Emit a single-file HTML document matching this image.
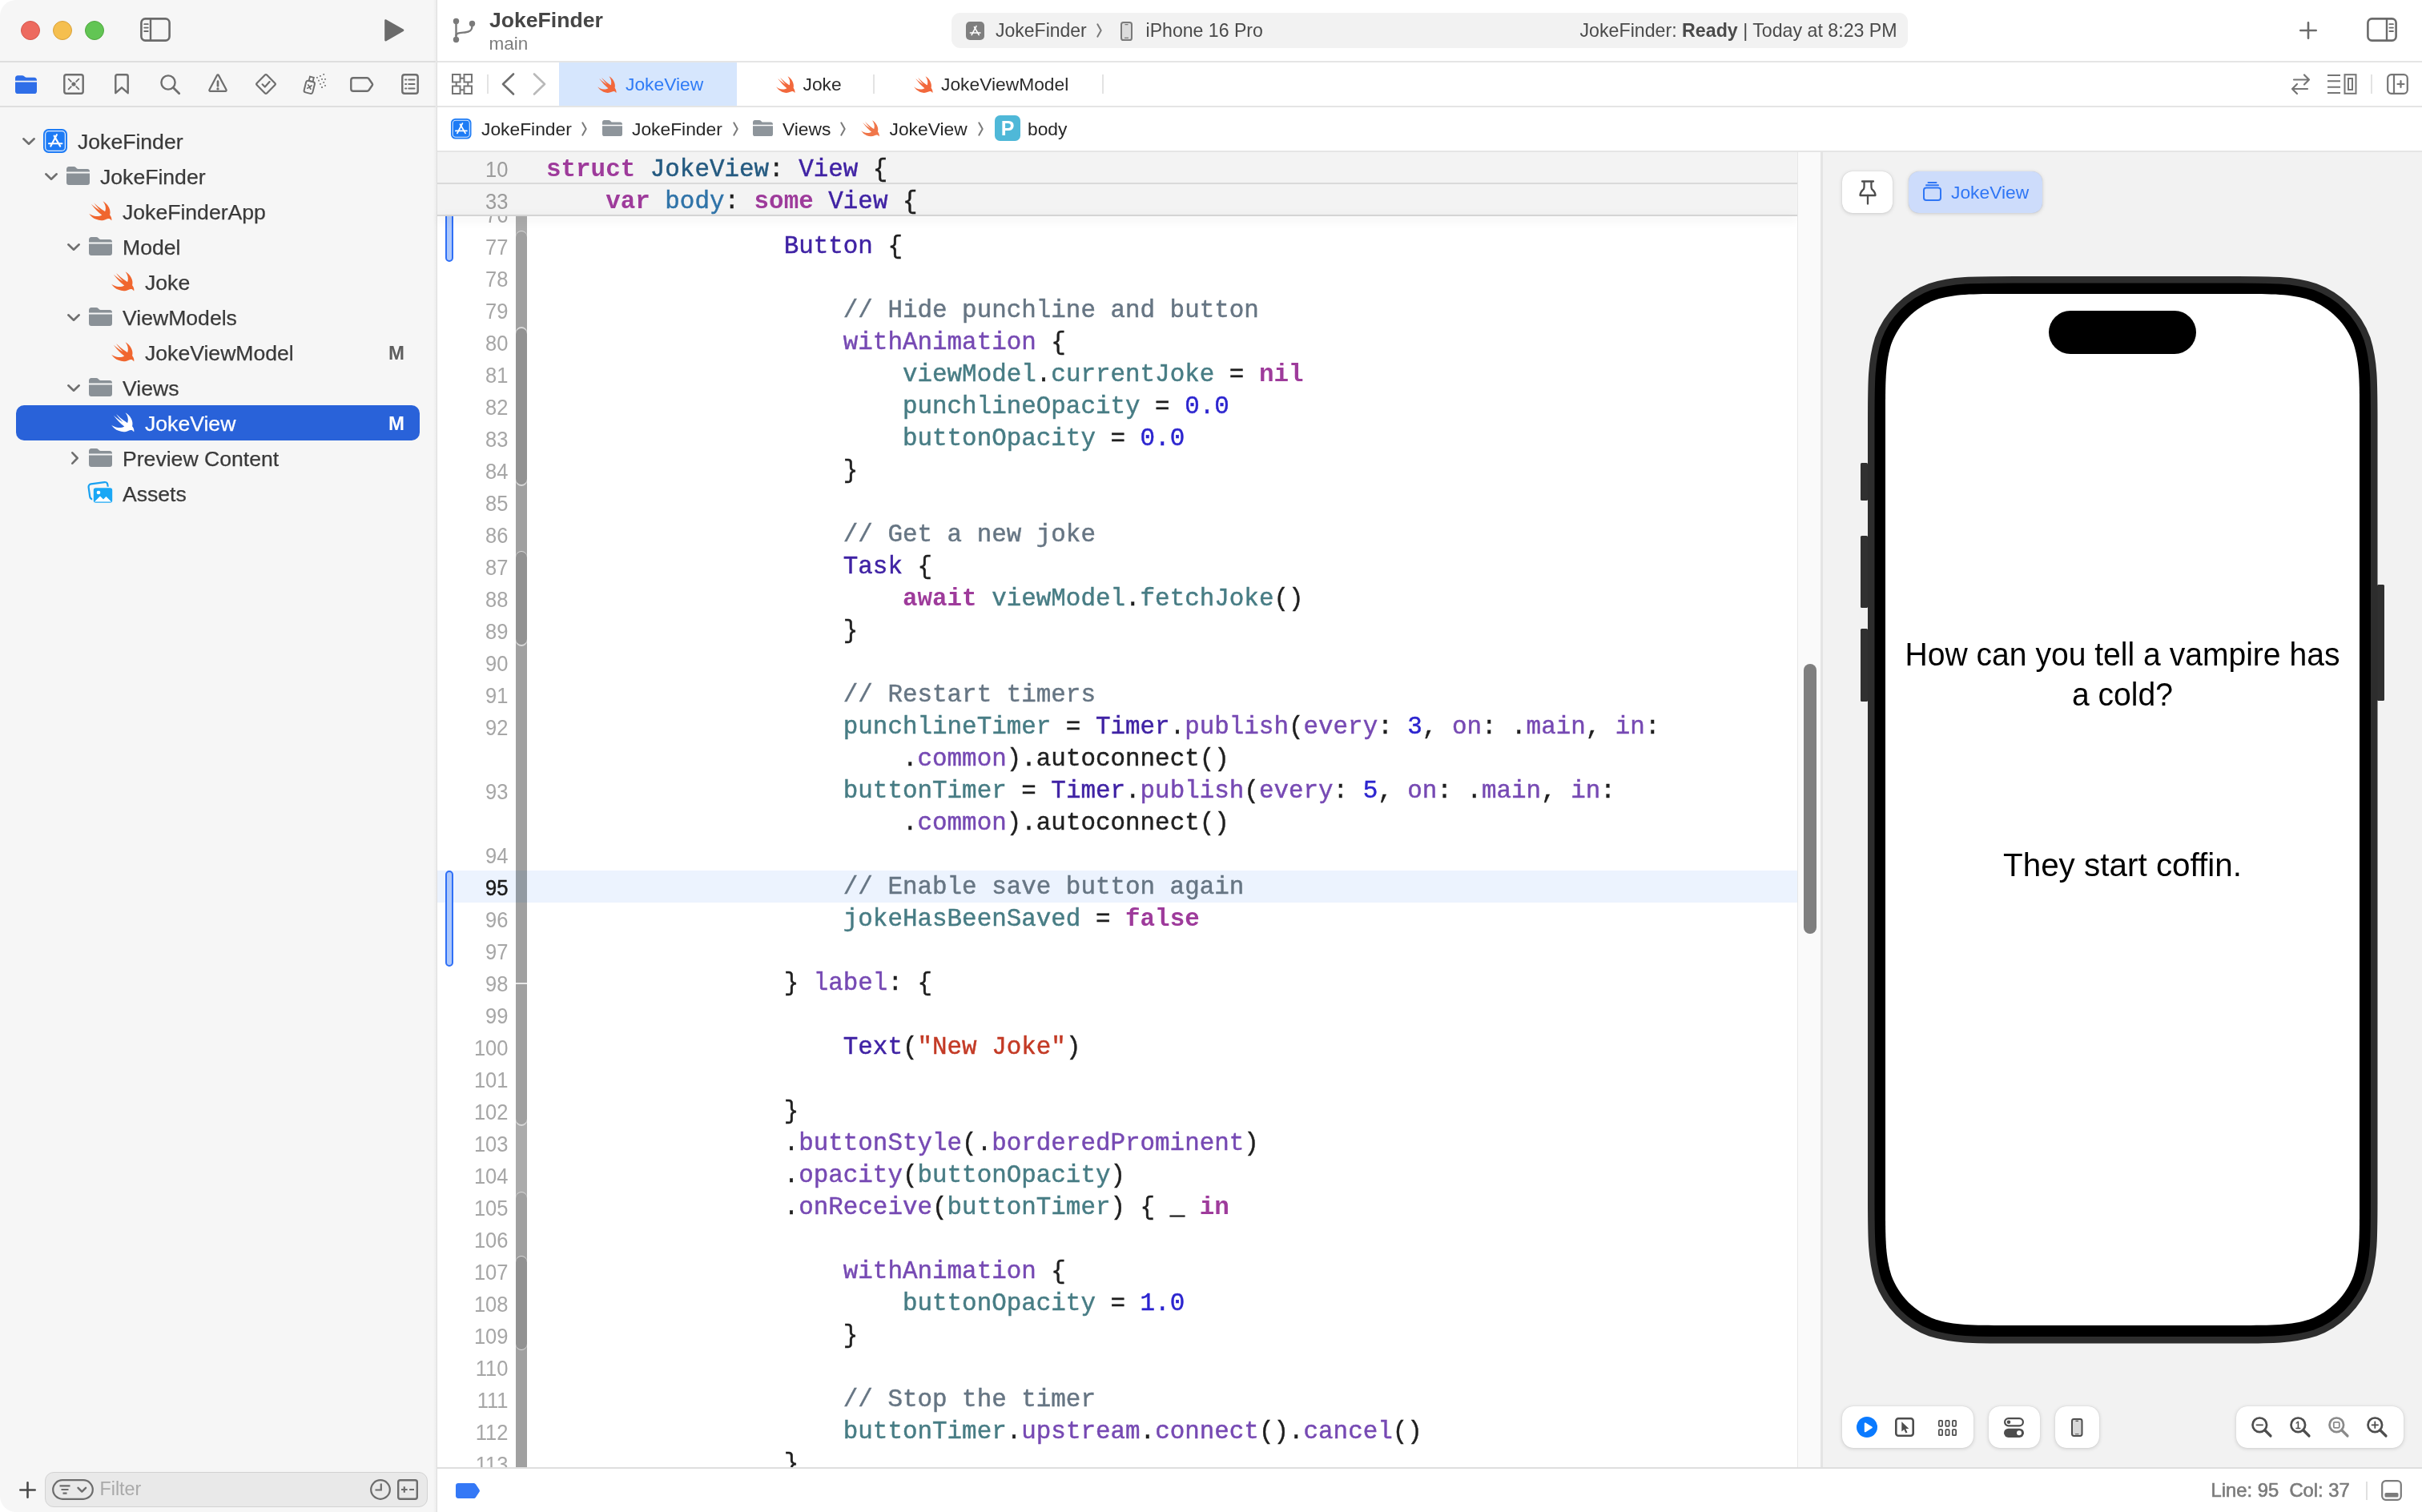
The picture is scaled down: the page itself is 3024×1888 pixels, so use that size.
<!DOCTYPE html>
<html lang="en"><head><meta charset="utf-8"><title>JokeFinder</title>
<style>
*{box-sizing:border-box;margin:0;padding:0}
html,body{width:3024px;height:1888px;overflow:hidden;background:#fff}
body{position:relative;font-family:"Liberation Sans",sans-serif;color:#262626;-webkit-font-smoothing:antialiased}
#win{position:absolute;left:0;top:0;width:3024px;height:1888px;overflow:hidden;will-change:transform}
.r,.ic,.t{position:absolute}
.ic{overflow:visible}
.t{white-space:pre;line-height:1}
.b{font-weight:700}
.mono{font-family:"Liberation Mono",monospace}
.code{font-family:"Liberation Mono",monospace;font-size:30.9px;color:#1f1f1f;-webkit-text-stroke:.45px}
.ln{font-family:"Liberation Sans",sans-serif;color:#a4a4a4;text-align:right}
.kw{color:#9e3b9b;font-weight:700;-webkit-text-stroke:0}
.td{color:#245a80}.od{color:#2f73a8}.st{color:#3f22a4}.sf{color:#7649b3}
.pj{color:#477c84}.nu{color:#2b24cf}.sr{color:#c33a25}.cm{color:#667583}
</style></head>
<body>
<div id="win">
<div class="r" style="left:0px;top:0px;width:545px;height:1888px;background:#f6f6f6;border-radius:20px 0 0 20px"></div>
<div class="r" style="left:541px;top:0px;width:4px;height:1888px;background:linear-gradient(to right,rgba(0,0,0,0),rgba(0,0,0,.045));"></div>
<div class="r" style="left:545px;top:0px;width:1px;height:1888px;background:#dedede;"></div>
<div class="r" style="left:0px;top:76px;width:544px;height:2px;background:#dedede;"></div>
<div class="r" style="left:0px;top:132px;width:544px;height:2px;background:#dedede;"></div>
<div class="r" style="left:26px;top:26px;width:24px;height:24px;background:#ed6a5f;border-radius:50%;border:1px solid #d5574c"></div>
<div class="r" style="left:66px;top:26px;width:24px;height:24px;background:#f5bf4f;border-radius:50%;border:1px solid #d9a13a"></div>
<div class="r" style="left:106px;top:26px;width:24px;height:24px;background:#62c554;border-radius:50%;border:1px solid #4fa73f"></div>
<svg class="ic" style="left:175px;top:22px" width="38" height="30" viewBox="0 0 38 30" ><rect x="1.4" y="1.4" width="35.2" height="27.2" rx="5" fill="none" stroke="#6b6b6b" stroke-width="2.6"/><path d="M13 1.4V28.6" stroke="#6b6b6b" stroke-width="2.4"/><path d="M5.2 8.2h4.6M5.2 12.6h4.6M5.2 17h4.6" stroke="#6b6b6b" stroke-width="1.8" stroke-linecap="round"/></svg>
<svg class="ic" style="left:478px;top:24px" width="28" height="28" viewBox="0 0 28 28" ><path d="M2.2 1.6C2.2 .5 3.3-.1 4.3.5L25.6 12.4c1 .6 1 1.9 0 2.5L4.3 27.2c-1 .6-2.1 0-2.1-1.1z" fill="#6b6b6b"/></svg>
<svg class="ic" style="left:18.5px;top:92.5px" width="27" height="25" viewBox="0 0 27 25" ><path d="M0 4.6C0 2.6 1.3 1.2 3.2 1.2h5.4c1.1 0 1.9.3 2.6 1l.9.9c.6.5 1.1.7 1.9.7h9.8c1.9 0 3.2 1.3 3.2 3.2v.7H0z" fill="#2f6ee8"/><path d="M0 9.4h27v11.5c0 1.9-1.3 3.2-3.2 3.2H3.2C1.3 24.1 0 22.800 0 20.900z" fill="#2f6ee8"/></svg>
<svg class="ic" style="left:79.0px;top:92.0px" width="26" height="26" viewBox="0 0 26 26" ><rect x="1.3" y="1.3" width="23.4" height="23.4" rx="2.5" fill="none" stroke="#6e6e6e" stroke-width="2.4"/><circle cx="13" cy="13" r="2.6" fill="#6e6e6e"/><path d="M6.6 6.6l3.2 3.2M19.400 6.600l-3.200 3.200M6.600 19.400l3.200-3.200M19.400 19.400l-3.200-3.200" stroke="#6e6e6e" stroke-width="1.8" stroke-linecap="round"/></svg>
<svg class="ic" style="left:143.0px;top:92.0px" width="18" height="26" viewBox="0 0 18 26" ><path d="M1.300 3.300c0-1.200.8-2 2-2h11.400c1.200 0 2 .8 2 2v20.900l-7.700-6.900-7.700 6.900z" fill="none" stroke="#6e6e6e" stroke-width="2.400" stroke-linejoin="round"/></svg>
<svg class="ic" style="left:199.5px;top:92.5px" width="25" height="25" viewBox="0 0 25 25" ><circle cx="10" cy="10" r="8.600" fill="none" stroke="#6e6e6e" stroke-width="2.400"/><path d="M16.400 16.400l7.300 7.300" stroke="#6e6e6e" stroke-width="2.800" stroke-linecap="round"/></svg>
<svg class="ic" style="left:259px;top:91.5px" width="26" height="25" viewBox="0 0 26 25" ><path d="M12 2.1c.5-.9 1.500-.9 2 0l9.500 17.900c.5.900 0 1.900-1.100 1.900H3.600c-1.100 0-1.600-1-1.100-1.900z" fill="none" stroke="#6e6e6e" stroke-width="2.200" stroke-linejoin="round"/><path d="M13 9.700v5.600" stroke="#6e6e6e" stroke-width="2.700" stroke-linecap="round"/><circle cx="13" cy="18.900" r="1.600" fill="#6e6e6e"/></svg>
<svg class="ic" style="left:319.0px;top:92.0px" width="26" height="26" viewBox="0 0 26 26" ><path d="M11.700 1.800c.8-.8 1.800-.8 2.600 0l9.900 9.900c.8.800.8 1.800 0 2.600l-9.900 9.900c-.8.800-1.800.8-2.600 0l-9.900-9.900c-.8-.8-.8-1.800 0-2.600z" fill="none" stroke="#6e6e6e" stroke-width="2.200"/><path d="M8.600 13.300l3.200 3.200 5.800-6.400" fill="none" stroke="#6e6e6e" stroke-width="2.200" stroke-linecap="round" stroke-linejoin="round"/></svg>
<svg class="ic" style="left:378.0px;top:91.0px" width="28" height="28" viewBox="0 0 28 28" ><g transform="rotate(14 9 17)"><rect x="3" y="10.500" width="11" height="15" rx="2.400" fill="none" stroke="#6e6e6e" stroke-width="2"/><rect x="6" y="5" width="5" height="5.500" fill="none" stroke="#6e6e6e" stroke-width="1.800"/><path d="M6.300 15.500l4.400 4.400M10.700 15.500l-4.400 4.400" stroke="#6e6e6e" stroke-width="1.700" stroke-linecap="round"/></g><g fill="#6e6e6e"><rect x="25.30" y="1.00" width="1.8" height="1.8" rx=".5"/><rect x="21.00" y="3.00" width="1.8" height="1.8" rx=".5"/><rect x="17.00" y="4.90" width="1.8" height="1.8" rx=".5"/><rect x="27.10" y="7.00" width="1.8" height="1.8" rx=".5"/><rect x="23.10" y="7.00" width="1.8" height="1.8" rx=".5"/><rect x="19.10" y="8.80" width="1.8" height="1.8" rx=".5"/><rect x="25.30" y="10.90" width="1.8" height="1.8" rx=".5"/><rect x="21.00" y="12.90" width="1.8" height="1.8" rx=".5"/><rect x="27.10" y="15.00" width="1.8" height="1.8" rx=".5"/><rect x="23.10" y="17.10" width="1.8" height="1.8" rx=".5"/></g></svg>
<svg class="ic" style="left:437.0px;top:95.5px" width="30" height="19" viewBox="0 0 30 19" ><path d="M1.300 4.100c0-1.700 1.100-2.800 2.800-2.800h17.200c1 0 1.700.4 2.300 1.200l4.200 6c.5.700.5 1.300 0 2l-4.200 6c-.6.800-1.300 1.200-2.300 1.200H4.100c-1.700 0-2.800-1.100-2.800-2.800z" fill="none" stroke="#6e6e6e" stroke-width="2.400"/></svg>
<svg class="ic" style="left:501.0px;top:92.0px" width="22" height="26" viewBox="0 0 22 26" ><rect x="1.300" y="1.300" width="19.400" height="23.400" rx="2.800" fill="none" stroke="#6e6e6e" stroke-width="2.400"/><path d="M9.400 7.500h7M9.400 13h7M9.400 18.500h7" stroke="#6e6e6e" stroke-width="2.200" stroke-linecap="round"/><path d="M5.200 7.500h1M5.200 13h1M5.200 18.500h1" stroke="#6e6e6e" stroke-width="2.200" stroke-linecap="round"/></svg>
<svg class="ic" style="left:28px;top:171.5px" width="16" height="9" viewBox="0 0 16 9" ><path d="M1.3 1.3L8.0 7.7L14.7 1.3" fill="none" stroke="#6f6f6f" stroke-width="2.6" stroke-linecap="round" stroke-linejoin="round"/></svg>
<svg class="ic" style="left:54px;top:161px" width="30" height="30" viewBox="0 0 30 30" ><rect x="0" y="0" width="30" height="30" rx="6.5" fill="#1d7bf5"/><rect x="2.6" y="2.6" width="24.8" height="24.8" rx="4.4" fill="none" stroke="#fff" stroke-width="1.3" opacity=".85"/><g stroke="#fff" stroke-width="2.1" stroke-linecap="round" fill="none"><path d="M16.9 7.2L9.3 21.6"/><path d="M13.6 8.6L21.2 21.6"/><path d="M7 18.2H23.4"/></g></svg>
<div class="t " style="left:97px;top:164.38px;font-size:26.6px;color:#3a3a3a;-webkit-text-stroke:.25px">JokeFinder</div>
<svg class="ic" style="left:56px;top:215.5px" width="16" height="9" viewBox="0 0 16 9" ><path d="M1.3 1.3L8.0 7.7L14.7 1.3" fill="none" stroke="#6f6f6f" stroke-width="2.6" stroke-linecap="round" stroke-linejoin="round"/></svg>
<svg class="ic" style="left:83px;top:207.8px" width="29" height="23" viewBox="0 0 29 23" preserveAspectRatio="none"><path d="M0 3.2C0 1.4 1.2 0 3 0h6.2c1 0 1.7.3 2.4 1l1.2 1.2c.5.5 1 .7 1.8.7H26c1.8 0 3 1.2 3 3V6.6H0z" fill="#8a9197"/><path d="M0 8.4h29V20c0 1.8-1.2 3-3 3H3c-1.8 0-3-1.2-3-3z" fill="#8a9197"/></svg>
<div class="t " style="left:125px;top:208.38px;font-size:26.6px;color:#3a3a3a;-webkit-text-stroke:.25px">JokeFinder</div>
<svg class="ic" style="left:111px;top:251.2px" width="29" height="25" viewBox="2.3 3.3 18.6 16.8" preserveAspectRatio="none"><path d="M13.543 3.41c4.114 2.47 6.545 7.162 5.549 11.131-.024.093-.05.181-.076.272l.002.001c2.062 2.538 1.5 5.258 1.236 4.745-1.072-2.086-3.066-1.568-4.088-1.043a6.803 6.803 0 0 1-.281.158l-.02.012-.002.002c-2.115 1.123-4.957 1.205-7.812-.022a12.568 12.568 0 0 1-5.64-4.838c.649.48 1.35.902 2.097 1.252 3.019 1.414 6.051 1.311 8.197-.002C9.651 12.73 7.101 9.67 5.146 7.191a10.628 10.628 0 0 1-1.005-1.384c2.34 2.142 6.038 4.83 7.365 5.576C8.69 8.408 6.208 4.743 6.324 4.86c4.436 4.47 8.528 6.996 8.528 6.996.154.085.27.154.36.213.085-.215.16-.437.224-.668.708-2.588-.09-5.548-1.893-7.992z" fill="#f0662f"/></svg>
<div class="t " style="left:153px;top:252.38px;font-size:26.6px;color:#3a3a3a;-webkit-text-stroke:.25px">JokeFinderApp</div>
<svg class="ic" style="left:84px;top:303.5px" width="16" height="9" viewBox="0 0 16 9" ><path d="M1.3 1.3L8.0 7.7L14.7 1.3" fill="none" stroke="#6f6f6f" stroke-width="2.6" stroke-linecap="round" stroke-linejoin="round"/></svg>
<svg class="ic" style="left:111px;top:295.8px" width="29" height="23" viewBox="0 0 29 23" preserveAspectRatio="none"><path d="M0 3.2C0 1.4 1.2 0 3 0h6.2c1 0 1.7.3 2.4 1l1.2 1.2c.5.5 1 .7 1.8.7H26c1.8 0 3 1.2 3 3V6.6H0z" fill="#8a9197"/><path d="M0 8.4h29V20c0 1.8-1.2 3-3 3H3c-1.8 0-3-1.2-3-3z" fill="#8a9197"/></svg>
<div class="t " style="left:153px;top:296.38px;font-size:26.6px;color:#3a3a3a;-webkit-text-stroke:.25px">Model</div>
<svg class="ic" style="left:139px;top:339.2px" width="29" height="25" viewBox="2.3 3.3 18.6 16.8" preserveAspectRatio="none"><path d="M13.543 3.41c4.114 2.47 6.545 7.162 5.549 11.131-.024.093-.05.181-.076.272l.002.001c2.062 2.538 1.5 5.258 1.236 4.745-1.072-2.086-3.066-1.568-4.088-1.043a6.803 6.803 0 0 1-.281.158l-.02.012-.002.002c-2.115 1.123-4.957 1.205-7.812-.022a12.568 12.568 0 0 1-5.64-4.838c.649.48 1.35.902 2.097 1.252 3.019 1.414 6.051 1.311 8.197-.002C9.651 12.73 7.101 9.67 5.146 7.191a10.628 10.628 0 0 1-1.005-1.384c2.34 2.142 6.038 4.83 7.365 5.576C8.69 8.408 6.208 4.743 6.324 4.86c4.436 4.47 8.528 6.996 8.528 6.996.154.085.27.154.36.213.085-.215.16-.437.224-.668.708-2.588-.09-5.548-1.893-7.992z" fill="#f0662f"/></svg>
<div class="t " style="left:181px;top:340.38px;font-size:26.6px;color:#3a3a3a;-webkit-text-stroke:.25px">Joke</div>
<svg class="ic" style="left:84px;top:391.5px" width="16" height="9" viewBox="0 0 16 9" ><path d="M1.3 1.3L8.0 7.7L14.7 1.3" fill="none" stroke="#6f6f6f" stroke-width="2.6" stroke-linecap="round" stroke-linejoin="round"/></svg>
<svg class="ic" style="left:111px;top:383.8px" width="29" height="23" viewBox="0 0 29 23" preserveAspectRatio="none"><path d="M0 3.2C0 1.4 1.2 0 3 0h6.2c1 0 1.7.3 2.4 1l1.2 1.2c.5.5 1 .7 1.8.7H26c1.8 0 3 1.2 3 3V6.6H0z" fill="#8a9197"/><path d="M0 8.4h29V20c0 1.8-1.2 3-3 3H3c-1.8 0-3-1.2-3-3z" fill="#8a9197"/></svg>
<div class="t " style="left:153px;top:384.38px;font-size:26.6px;color:#3a3a3a;-webkit-text-stroke:.25px">ViewModels</div>
<svg class="ic" style="left:139px;top:427.2px" width="29" height="25" viewBox="2.3 3.3 18.6 16.8" preserveAspectRatio="none"><path d="M13.543 3.41c4.114 2.47 6.545 7.162 5.549 11.131-.024.093-.05.181-.076.272l.002.001c2.062 2.538 1.5 5.258 1.236 4.745-1.072-2.086-3.066-1.568-4.088-1.043a6.803 6.803 0 0 1-.281.158l-.02.012-.002.002c-2.115 1.123-4.957 1.205-7.812-.022a12.568 12.568 0 0 1-5.64-4.838c.649.48 1.35.902 2.097 1.252 3.019 1.414 6.051 1.311 8.197-.002C9.651 12.73 7.101 9.67 5.146 7.191a10.628 10.628 0 0 1-1.005-1.384c2.34 2.142 6.038 4.83 7.365 5.576C8.69 8.408 6.208 4.743 6.324 4.86c4.436 4.47 8.528 6.996 8.528 6.996.154.085.27.154.36.213.085-.215.16-.437.224-.668.708-2.588-.09-5.548-1.893-7.992z" fill="#f0662f"/></svg>
<div class="t " style="left:181px;top:428.38px;font-size:26.6px;color:#3a3a3a;-webkit-text-stroke:.25px">JokeViewModel</div>
<div class="t b" style="left:485px;top:429.28px;font-size:24px;color:#5e5e5e">M</div>
<svg class="ic" style="left:84px;top:479.5px" width="16" height="9" viewBox="0 0 16 9" ><path d="M1.3 1.3L8.0 7.7L14.7 1.3" fill="none" stroke="#6f6f6f" stroke-width="2.6" stroke-linecap="round" stroke-linejoin="round"/></svg>
<svg class="ic" style="left:111px;top:471.8px" width="29" height="23" viewBox="0 0 29 23" preserveAspectRatio="none"><path d="M0 3.2C0 1.4 1.2 0 3 0h6.2c1 0 1.7.3 2.4 1l1.2 1.2c.5.5 1 .7 1.8.7H26c1.8 0 3 1.2 3 3V6.6H0z" fill="#8a9197"/><path d="M0 8.4h29V20c0 1.8-1.2 3-3 3H3c-1.8 0-3-1.2-3-3z" fill="#8a9197"/></svg>
<div class="t " style="left:153px;top:472.38px;font-size:26.6px;color:#3a3a3a;-webkit-text-stroke:.25px">Views</div>
<div class="r" style="left:20px;top:506px;width:504px;height:44px;background:#2962d9;border-radius:10px"></div>
<svg class="ic" style="left:139px;top:515.2px" width="29" height="25" viewBox="2.3 3.3 18.6 16.8" preserveAspectRatio="none"><path d="M13.543 3.41c4.114 2.47 6.545 7.162 5.549 11.131-.024.093-.05.181-.076.272l.002.001c2.062 2.538 1.5 5.258 1.236 4.745-1.072-2.086-3.066-1.568-4.088-1.043a6.803 6.803 0 0 1-.281.158l-.02.012-.002.002c-2.115 1.123-4.957 1.205-7.812-.022a12.568 12.568 0 0 1-5.64-4.838c.649.48 1.35.902 2.097 1.252 3.019 1.414 6.051 1.311 8.197-.002C9.651 12.73 7.101 9.67 5.146 7.191a10.628 10.628 0 0 1-1.005-1.384c2.34 2.142 6.038 4.83 7.365 5.576C8.69 8.408 6.208 4.743 6.324 4.86c4.436 4.47 8.528 6.996 8.528 6.996.154.085.27.154.36.213.085-.215.16-.437.224-.668.708-2.588-.09-5.548-1.893-7.992z" fill="#fff"/></svg>
<div class="t " style="left:181px;top:516.38px;font-size:26.6px;color:#fff;-webkit-text-stroke:.25px">JokeView</div>
<div class="t b" style="left:485px;top:517.28px;font-size:24px;color:#fff">M</div>
<svg class="ic" style="left:88.5px;top:564px" width="9" height="16" viewBox="0 0 9 16" ><path d="M1.3 1.3L7.7 8.0L1.3 14.7" fill="none" stroke="#6f6f6f" stroke-width="2.6" stroke-linecap="round" stroke-linejoin="round"/></svg>
<svg class="ic" style="left:111px;top:559.8px" width="29" height="23" viewBox="0 0 29 23" preserveAspectRatio="none"><path d="M0 3.2C0 1.4 1.2 0 3 0h6.2c1 0 1.7.3 2.4 1l1.2 1.2c.5.5 1 .7 1.8.7H26c1.8 0 3 1.2 3 3V6.6H0z" fill="#8a9197"/><path d="M0 8.4h29V20c0 1.8-1.2 3-3 3H3c-1.8 0-3-1.2-3-3z" fill="#8a9197"/></svg>
<div class="t " style="left:153px;top:560.38px;font-size:26.6px;color:#3a3a3a;-webkit-text-stroke:.25px">Preview Content</div>
<svg class="ic" style="left:110px;top:602px" width="32" height="28" viewBox="0 0 32 28" ><rect x="1.200" y="1.200" width="24" height="19" rx="3.500" fill="#f6f6f6" stroke="#1aa1f1" stroke-width="2.200" transform="rotate(-8 13 10)"/><rect x="6" y="6.500" width="25" height="20" rx="3.500" fill="#1aa7f5" stroke="#f6f6f6" stroke-width="1.600"/><circle cx="13" cy="13" r="2.300" fill="#fff"/><path d="M8 24.500l7-7 4 4 3.500-3.500 6.500 6.500z" fill="#fff"/></svg>
<div class="t " style="left:153px;top:604.38px;font-size:26.6px;color:#3a3a3a;-webkit-text-stroke:.25px">Assets</div>
<svg class="ic" style="left:24px;top:1850px" width="21" height="21" viewBox="0 0 21 21" ><path d="M10.500 1.300v18.400M1.300 10.500h18.400" stroke="#4a4a4a" stroke-width="2.600" stroke-linecap="round"/></svg>
<div class="r" style="left:56px;top:1838px;width:478px;height:44px;background:#e9e9e9;border-radius:11px;border:1.500px solid #d2d2d2"></div>
<svg class="ic" style="left:65px;top:1847px" width="52" height="26" viewBox="0 0 52 26" ><rect x="1.200" y="1.200" width="49.600" height="23.600" rx="11.800" fill="none" stroke="#6c6c6c" stroke-width="2.200"/><path d="M9.500 8.300h13M11.500 13h9M13.500 17.700h5" stroke="#6c6c6c" stroke-width="2.200" stroke-linecap="butt"/><path d="M32.500 10.800l4.800 4.800 4.800-4.800" fill="none" stroke="#6c6c6c" stroke-width="2.400" stroke-linecap="round" stroke-linejoin="round"/></svg>
<div class="t " style="left:124.5px;top:1848.08px;font-size:23.3px;color:#a9a9a9">Filter</div>
<svg class="ic" style="left:462px;top:1847px" width="26" height="26" viewBox="0 0 26 26" ><circle cx="13" cy="13" r="11.800" fill="none" stroke="#6c6c6c" stroke-width="2.200"/><path d="M13.800 5.500v8H6.500" fill="none" stroke="#6c6c6c" stroke-width="2.200"/></svg>
<svg class="ic" style="left:496px;top:1847px" width="26" height="26" viewBox="0 0 26 26" ><rect x="1.200" y="1.200" width="23.600" height="23.600" rx="2.500" fill="none" stroke="#6c6c6c" stroke-width="2.400"/><path d="M5 13h7.600M8.800 9.200v7.600M15.200 13h5.800" stroke="#6c6c6c" stroke-width="2.200"/></svg>
<div class="r" style="left:546px;top:76px;width:2478px;height:2px;background:#e5e5e5;"></div>
<div class="r" style="left:546px;top:132px;width:2478px;height:2px;background:#e5e5e5;"></div>
<div class="r" style="left:546px;top:188px;width:2478px;height:2px;background:#e5e5e5;"></div>
<svg class="ic" style="left:565px;top:22px" width="30" height="32" viewBox="0 0 30 32" ><g fill="none" stroke="#7a7a7a" stroke-width="2.400" stroke-linecap="round"><path d="M4.500 7.500V25"/><path d="M24.500 10.500c0 6-3.500 7.500-9 8-7 .6-11 .5-11 4"/></g><circle cx="4.500" cy="4.500" r="3.700" fill="#7a7a7a"/><circle cx="24.500" cy="7.500" r="3.700" fill="#7a7a7a"/><circle cx="4.500" cy="27.500" r="3.700" fill="#7a7a7a"/></svg>
<div class="t b" style="left:611px;top:11.98px;font-size:26.6px;color:#464646">JokeFinder</div>
<div class="t " style="left:610.5px;top:43.55px;font-size:22.5px;color:#7d7d7d">main</div>
<div class="r" style="left:1188px;top:16px;width:1194px;height:44px;background:#f2f2f2;border-radius:11px"></div>
<svg class="ic" style="left:1206px;top:27px" width="23" height="23" viewBox="0 0 30 30" ><rect x="0" y="0" width="30" height="30" rx="6.5" fill="#7f7f7f"/><g stroke="#fff" stroke-width="2.1" stroke-linecap="round" fill="none"><path d="M16.9 7.2L9.3 21.6"/><path d="M13.6 8.6L21.2 21.6"/><path d="M7 18.2H23.4"/></g></svg>
<div class="t " style="left:1243px;top:27.33px;font-size:23px;color:#4a4a4a">JokeFinder</div>
<svg class="ic" style="left:1368.5px;top:29px" width="7" height="18" viewBox="0 0 7 18" ><path d="M1.3 1.3L5.7 9.0L1.3 16.7" fill="none" stroke="#7a7a7a" stroke-width="2" stroke-linecap="round" stroke-linejoin="round"/></svg>
<svg class="ic" style="left:1399px;top:26.5px" width="15" height="24" viewBox="0 0 15 24" ><rect x="1" y="1" width="13" height="22" rx="2.600" fill="#dcdcdc" stroke="#7a7a7a" stroke-width="2"/><path d="M5.500 3.700h4M5 20.300h5" stroke="#7a7a7a" stroke-width="1.300"/></svg>
<div class="t " style="left:1430.5px;top:27.25px;font-size:23.1px;color:#4a4a4a">iPhone 16 Pro</div>
<div class="t " style="left:1972.5px;top:27.46px;font-size:23.2px;color:#4a4a4a">JokeFinder: <b>Ready</b> | Today at 8:23 PM</div>
<svg class="ic" style="left:2871px;top:27px" width="22" height="22" viewBox="0 0 22 22" ><path d="M11 1.300v19.400M1.300 11h19.400" stroke="#6b6b6b" stroke-width="2.600" stroke-linecap="round"/></svg>
<svg class="ic" style="left:2955px;top:22px" width="38" height="30" viewBox="0 0 38 30" ><rect x="1.400" y="1.400" width="35.200" height="27.200" rx="5" fill="none" stroke="#6b6b6b" stroke-width="2.600"/><path d="M25 1.400V28.600" stroke="#6b6b6b" stroke-width="2.400"/><path d="M28.400 8.200h4.600M28.400 12.600h4.600M28.400 17h4.600" stroke="#6b6b6b" stroke-width="1.800" stroke-linecap="round"/></svg>
<svg class="ic" style="left:564px;top:92px" width="26" height="26" viewBox="0 0 26 26" ><g fill="none" stroke="#757575" stroke-width="2"><rect x="1" y="1" width="9.500" height="9.500"/><rect x="15.500" y="1" width="9.500" height="9.500"/><rect x="1" y="15.500" width="9.500" height="9.500"/><rect x="15.500" y="15.500" width="9.500" height="9.500"/><path d="M10.500 5.700h5M5.700 10.500v5M20.300 10.500v5M10.500 20.300h5"/></g></svg>
<div class="r" style="left:608px;top:93px;width:2px;height:24px;background:#e3e3e3;"></div>
<svg class="ic" style="left:626px;top:91px" width="17" height="28" viewBox="0 0 17 28" ><path d="M15 1.500L2 14l13 12.500" fill="none" stroke="#6e6e6e" stroke-width="2.600" stroke-linecap="round" stroke-linejoin="round"/></svg>
<svg class="ic" style="left:665px;top:91px" width="17" height="28" viewBox="0 0 17 28" ><path d="M2 1.500L15 14 2 26.500" fill="none" stroke="#b9b9b9" stroke-width="2.600" stroke-linecap="round" stroke-linejoin="round"/></svg>
<div class="r" style="left:698px;top:78px;width:222px;height:54px;background:#d6e6fd;"></div>
<svg class="ic" style="left:746px;top:95px" width="24" height="21.7" viewBox="2.3 3.3 18.6 16.8" preserveAspectRatio="none"><path d="M13.543 3.41c4.114 2.47 6.545 7.162 5.549 11.131-.024.093-.05.181-.076.272l.002.001c2.062 2.538 1.5 5.258 1.236 4.745-1.072-2.086-3.066-1.568-4.088-1.043a6.803 6.803 0 0 1-.281.158l-.02.012-.002.002c-2.115 1.123-4.957 1.205-7.812-.022a12.568 12.568 0 0 1-5.64-4.838c.649.48 1.35.902 2.097 1.252 3.019 1.414 6.051 1.311 8.197-.002C9.651 12.73 7.101 9.67 5.146 7.191a10.628 10.628 0 0 1-1.005-1.384c2.34 2.142 6.038 4.83 7.365 5.576C8.69 8.408 6.208 4.743 6.324 4.86c4.436 4.47 8.528 6.996 8.528 6.996.154.085.27.154.36.213.085-.215.16-.437.224-.668.708-2.588-.09-5.548-1.893-7.992z" fill="#f2683c"/></svg>
<div class="t " style="left:781px;top:93.70px;font-size:22.8px;color:#2f7bf6">JokeView</div>
<svg class="ic" style="left:968.5px;top:95px" width="24" height="21.7" viewBox="2.3 3.3 18.6 16.8" preserveAspectRatio="none"><path d="M13.543 3.41c4.114 2.47 6.545 7.162 5.549 11.131-.024.093-.05.181-.076.272l.002.001c2.062 2.538 1.5 5.258 1.236 4.745-1.072-2.086-3.066-1.568-4.088-1.043a6.803 6.803 0 0 1-.281.158l-.02.012-.002.002c-2.115 1.123-4.957 1.205-7.812-.022a12.568 12.568 0 0 1-5.64-4.838c.649.48 1.35.902 2.097 1.252 3.019 1.414 6.051 1.311 8.197-.002C9.651 12.73 7.101 9.67 5.146 7.191a10.628 10.628 0 0 1-1.005-1.384c2.34 2.142 6.038 4.83 7.365 5.576C8.69 8.408 6.208 4.743 6.324 4.86c4.436 4.47 8.528 6.996 8.528 6.996.154.085.27.154.36.213.085-.215.16-.437.224-.668.708-2.588-.09-5.548-1.893-7.992z" fill="#f2683c"/></svg>
<div class="t " style="left:1002.5px;top:93.70px;font-size:22.8px;color:#2a2a2a">Joke</div>
<div class="r" style="left:1090px;top:93px;width:2px;height:24px;background:#e3e3e3;"></div>
<svg class="ic" style="left:1140.5px;top:95px" width="24" height="21.7" viewBox="2.3 3.3 18.6 16.8" preserveAspectRatio="none"><path d="M13.543 3.41c4.114 2.47 6.545 7.162 5.549 11.131-.024.093-.05.181-.076.272l.002.001c2.062 2.538 1.5 5.258 1.236 4.745-1.072-2.086-3.066-1.568-4.088-1.043a6.803 6.803 0 0 1-.281.158l-.02.012-.002.002c-2.115 1.123-4.957 1.205-7.812-.022a12.568 12.568 0 0 1-5.64-4.838c.649.48 1.35.902 2.097 1.252 3.019 1.414 6.051 1.311 8.197-.002C9.651 12.73 7.101 9.67 5.146 7.191a10.628 10.628 0 0 1-1.005-1.384c2.34 2.142 6.038 4.83 7.365 5.576C8.69 8.408 6.208 4.743 6.324 4.86c4.436 4.47 8.528 6.996 8.528 6.996.154.085.27.154.36.213.085-.215.16-.437.224-.668.708-2.588-.09-5.548-1.893-7.992z" fill="#f2683c"/></svg>
<div class="t " style="left:1175px;top:93.70px;font-size:22.8px;color:#2a2a2a">JokeViewModel</div>
<div class="r" style="left:1376px;top:93px;width:2px;height:24px;background:#e3e3e3;"></div>
<svg class="ic" style="left:2860px;top:92px" width="25" height="26" viewBox="0 0 25 26" ><g fill="none" stroke="#757575" stroke-width="2.200" stroke-linecap="round" stroke-linejoin="round"><path d="M4 7.500h19M17 1.500l6 6-6 6"/><path d="M21 19H2M8 13l-6 6 6 6"/></g></svg>
<svg class="ic" style="left:2906px;top:92px" width="37" height="26" viewBox="0 0 37 26" ><g fill="none" stroke="#757575" stroke-width="2"><path d="M0 2h16M0 9.300h16M0 16.700h16M0 24h16"/><rect x="21.500" y="1.200" width="14" height="23.600"/><rect x="26" y="6" width="5" height="14"/></g></svg>
<div class="r" style="left:2960px;top:93px;width:2px;height:24px;background:#e3e3e3;"></div>
<svg class="ic" style="left:2980px;top:92px" width="27" height="26" viewBox="0 0 27 26" ><g fill="none" stroke="#757575" stroke-width="2.200"><rect x="1.200" y="1.200" width="24.600" height="23.600" rx="4.500"/><path d="M9 1.200v23.600"/><path d="M13.500 13h8M17.500 9v8" stroke-linecap="round"/></g></svg>
<svg class="ic" style="left:563px;top:147.5px" width="25.5" height="25.5" viewBox="0 0 30 30" ><rect x="0" y="0" width="30" height="30" rx="6.5" fill="#1d7bf5"/><rect x="2.6" y="2.6" width="24.8" height="24.8" rx="4.4" fill="none" stroke="#fff" stroke-width="1.3" opacity=".85"/><g stroke="#fff" stroke-width="2.1" stroke-linecap="round" fill="none"><path d="M16.9 7.2L9.3 21.6"/><path d="M13.6 8.6L21.2 21.6"/><path d="M7 18.2H23.4"/></g></svg>
<div class="t " style="left:601px;top:150.10px;font-size:22.8px;">JokeFinder</div>
<svg class="ic" style="left:726px;top:152px" width="7" height="18" viewBox="0 0 7 18" ><path d="M1.3 1.3L5.7 9.0L1.3 16.7" fill="none" stroke="#7a7a7a" stroke-width="2" stroke-linecap="round" stroke-linejoin="round"/></svg>
<svg class="ic" style="left:752px;top:150px" width="25" height="20" viewBox="0 0 29 23" preserveAspectRatio="none"><path d="M0 3.2C0 1.4 1.2 0 3 0h6.2c1 0 1.7.3 2.4 1l1.2 1.2c.5.5 1 .7 1.8.7H26c1.8 0 3 1.2 3 3V6.6H0z" fill="#8e959b"/><path d="M0 8.4h29V20c0 1.8-1.2 3-3 3H3c-1.8 0-3-1.2-3-3z" fill="#8e959b"/></svg>
<div class="t " style="left:789px;top:150.10px;font-size:22.8px;">JokeFinder</div>
<svg class="ic" style="left:914.5px;top:152px" width="7" height="18" viewBox="0 0 7 18" ><path d="M1.3 1.3L5.7 9.0L1.3 16.7" fill="none" stroke="#7a7a7a" stroke-width="2" stroke-linecap="round" stroke-linejoin="round"/></svg>
<svg class="ic" style="left:940px;top:150px" width="25" height="20" viewBox="0 0 29 23" preserveAspectRatio="none"><path d="M0 3.2C0 1.4 1.2 0 3 0h6.2c1 0 1.7.3 2.4 1l1.2 1.2c.5.5 1 .7 1.8.7H26c1.8 0 3 1.2 3 3V6.6H0z" fill="#8e959b"/><path d="M0 8.4h29V20c0 1.8-1.2 3-3 3H3c-1.8 0-3-1.2-3-3z" fill="#8e959b"/></svg>
<div class="t " style="left:977px;top:150.10px;font-size:22.8px;">Views</div>
<svg class="ic" style="left:1048.5px;top:152px" width="7" height="18" viewBox="0 0 7 18" ><path d="M1.3 1.3L5.7 9.0L1.3 16.7" fill="none" stroke="#7a7a7a" stroke-width="2" stroke-linecap="round" stroke-linejoin="round"/></svg>
<svg class="ic" style="left:1074.5px;top:149.5px" width="23.3" height="21" viewBox="2.3 3.3 18.6 16.8" preserveAspectRatio="none"><path d="M13.543 3.41c4.114 2.47 6.545 7.162 5.549 11.131-.024.093-.05.181-.076.272l.002.001c2.062 2.538 1.5 5.258 1.236 4.745-1.072-2.086-3.066-1.568-4.088-1.043a6.803 6.803 0 0 1-.281.158l-.02.012-.002.002c-2.115 1.123-4.957 1.205-7.812-.022a12.568 12.568 0 0 1-5.64-4.838c.649.48 1.35.902 2.097 1.252 3.019 1.414 6.051 1.311 8.197-.002C9.651 12.73 7.101 9.67 5.146 7.191a10.628 10.628 0 0 1-1.005-1.384c2.34 2.142 6.038 4.83 7.365 5.576C8.69 8.408 6.208 4.743 6.324 4.86c4.436 4.47 8.528 6.996 8.528 6.996.154.085.27.154.36.213.085-.215.16-.437.224-.668.708-2.588-.09-5.548-1.893-7.992z" fill="#f0764a"/></svg>
<div class="t " style="left:1110.5px;top:150.10px;font-size:22.8px;">JokeView</div>
<svg class="ic" style="left:1220.5px;top:152px" width="7" height="18" viewBox="0 0 7 18" ><path d="M1.3 1.3L5.7 9.0L1.3 16.7" fill="none" stroke="#7a7a7a" stroke-width="2" stroke-linecap="round" stroke-linejoin="round"/></svg>
<div class="r" style="left:1242px;top:144px;width:32px;height:32px;background:#4fb8d8;border-radius:6.500px"></div>
<div class="t b" style="left:1242px;top:147.84px;font-size:25px;width:32px;text-align:center;color:#fff">P</div>
<div class="t " style="left:1283px;top:150.10px;font-size:22.8px;">body</div>
<div class="r" style="left:546px;top:190px;width:1698px;height:1643px;overflow:hidden;background:#fff">
<div class="r" style="left:0px;top:896.7px;width:1698px;height:40px;background:#ecf3fe;"></div>
<div class="t ln" style="left:23.5px;top:64.54px;font-size:27.6px;width:64.5px;text-align:right;color:#a6a6a6;transform:scaleX(.925);transform-origin:100% 50%">76</div>
<div class="t ln" style="left:23.5px;top:104.54px;font-size:27.6px;width:64.5px;text-align:right;color:#a6a6a6;transform:scaleX(.925);transform-origin:100% 50%">77</div>
<div class="t code" style="left:432.64px;top:102.83px;font-size:30.9px;"><span class="st">Button</span> {</div>
<div class="t ln" style="left:23.5px;top:144.54px;font-size:27.6px;width:64.5px;text-align:right;color:#a6a6a6;transform:scaleX(.925);transform-origin:100% 50%">78</div>
<div class="t ln" style="left:23.5px;top:184.54px;font-size:27.6px;width:64.5px;text-align:right;color:#a6a6a6;transform:scaleX(.925);transform-origin:100% 50%">79</div>
<div class="t code" style="left:506.79999999999995px;top:182.83px;font-size:30.9px;"><span class="cm">// Hide punchline and button</span></div>
<div class="t ln" style="left:23.5px;top:224.54px;font-size:27.6px;width:64.5px;text-align:right;color:#a6a6a6;transform:scaleX(.925);transform-origin:100% 50%">80</div>
<div class="t code" style="left:506.79999999999995px;top:222.83px;font-size:30.9px;"><span class="sf">withAnimation</span> {</div>
<div class="t ln" style="left:23.5px;top:264.54px;font-size:27.6px;width:64.5px;text-align:right;color:#a6a6a6;transform:scaleX(.925);transform-origin:100% 50%">81</div>
<div class="t code" style="left:580.96px;top:262.83px;font-size:30.9px;"><span class="pj">viewModel</span>.<span class="pj">currentJoke</span> = <span class="kw">nil</span></div>
<div class="t ln" style="left:23.5px;top:304.54px;font-size:27.6px;width:64.5px;text-align:right;color:#a6a6a6;transform:scaleX(.925);transform-origin:100% 50%">82</div>
<div class="t code" style="left:580.96px;top:302.83px;font-size:30.9px;"><span class="pj">punchlineOpacity</span> = <span class="nu">0.0</span></div>
<div class="t ln" style="left:23.5px;top:344.54px;font-size:27.6px;width:64.5px;text-align:right;color:#a6a6a6;transform:scaleX(.925);transform-origin:100% 50%">83</div>
<div class="t code" style="left:580.96px;top:342.83px;font-size:30.9px;"><span class="pj">buttonOpacity</span> = <span class="nu">0.0</span></div>
<div class="t ln" style="left:23.5px;top:384.54px;font-size:27.6px;width:64.5px;text-align:right;color:#a6a6a6;transform:scaleX(.925);transform-origin:100% 50%">84</div>
<div class="t code" style="left:506.79999999999995px;top:382.83px;font-size:30.9px;">}</div>
<div class="t ln" style="left:23.5px;top:424.54px;font-size:27.6px;width:64.5px;text-align:right;color:#a6a6a6;transform:scaleX(.925);transform-origin:100% 50%">85</div>
<div class="t ln" style="left:23.5px;top:464.54px;font-size:27.6px;width:64.5px;text-align:right;color:#a6a6a6;transform:scaleX(.925);transform-origin:100% 50%">86</div>
<div class="t code" style="left:506.79999999999995px;top:462.83px;font-size:30.9px;"><span class="cm">// Get a new joke</span></div>
<div class="t ln" style="left:23.5px;top:504.54px;font-size:27.6px;width:64.5px;text-align:right;color:#a6a6a6;transform:scaleX(.925);transform-origin:100% 50%">87</div>
<div class="t code" style="left:506.79999999999995px;top:502.83px;font-size:30.9px;"><span class="st">Task</span> {</div>
<div class="t ln" style="left:23.5px;top:544.54px;font-size:27.6px;width:64.5px;text-align:right;color:#a6a6a6;transform:scaleX(.925);transform-origin:100% 50%">88</div>
<div class="t code" style="left:580.96px;top:542.83px;font-size:30.9px;"><span class="kw">await</span> <span class="pj">viewModel</span>.<span class="pj">fetchJoke</span>()</div>
<div class="t ln" style="left:23.5px;top:584.54px;font-size:27.6px;width:64.5px;text-align:right;color:#a6a6a6;transform:scaleX(.925);transform-origin:100% 50%">89</div>
<div class="t code" style="left:506.79999999999995px;top:582.83px;font-size:30.9px;">}</div>
<div class="t ln" style="left:23.5px;top:624.54px;font-size:27.6px;width:64.5px;text-align:right;color:#a6a6a6;transform:scaleX(.925);transform-origin:100% 50%">90</div>
<div class="t ln" style="left:23.5px;top:664.54px;font-size:27.6px;width:64.5px;text-align:right;color:#a6a6a6;transform:scaleX(.925);transform-origin:100% 50%">91</div>
<div class="t code" style="left:506.79999999999995px;top:662.83px;font-size:30.9px;"><span class="cm">// Restart timers</span></div>
<div class="t ln" style="left:23.5px;top:704.54px;font-size:27.6px;width:64.5px;text-align:right;color:#a6a6a6;transform:scaleX(.925);transform-origin:100% 50%">92</div>
<div class="t code" style="left:506.79999999999995px;top:702.83px;font-size:30.9px;"><span class="pj">punchlineTimer</span> = <span class="st">Timer</span>.<span class="sf">publish</span>(<span class="sf">every</span>: <span class="nu">3</span>, <span class="sf">on</span>: .<span class="sf">main</span>, <span class="sf">in</span>:</div>
<div class="t code" style="left:580.96px;top:742.83px;font-size:30.9px;">.<span class="sf">common</span>).autoconnect()</div>
<div class="t ln" style="left:23.5px;top:784.54px;font-size:27.6px;width:64.5px;text-align:right;color:#a6a6a6;transform:scaleX(.925);transform-origin:100% 50%">93</div>
<div class="t code" style="left:506.79999999999995px;top:782.83px;font-size:30.9px;"><span class="pj">buttonTimer</span> = <span class="st">Timer</span>.<span class="sf">publish</span>(<span class="sf">every</span>: <span class="nu">5</span>, <span class="sf">on</span>: .<span class="sf">main</span>, <span class="sf">in</span>:</div>
<div class="t code" style="left:580.96px;top:822.83px;font-size:30.9px;">.<span class="sf">common</span>).autoconnect()</div>
<div class="t ln" style="left:23.5px;top:864.54px;font-size:27.6px;width:64.5px;text-align:right;color:#a6a6a6;transform:scaleX(.925);transform-origin:100% 50%">94</div>
<div class="t ln" style="left:23.5px;top:904.54px;font-size:27.6px;width:64.5px;text-align:right;color:#1a1a1a;transform:scaleX(.925);transform-origin:100% 50%;-webkit-text-stroke:.5px">95</div>
<div class="t code" style="left:506.79999999999995px;top:902.83px;font-size:30.9px;"><span class="cm">// Enable save button again</span></div>
<div class="t ln" style="left:23.5px;top:944.54px;font-size:27.6px;width:64.5px;text-align:right;color:#a6a6a6;transform:scaleX(.925);transform-origin:100% 50%">96</div>
<div class="t code" style="left:506.79999999999995px;top:942.83px;font-size:30.9px;"><span class="pj">jokeHasBeenSaved</span> = <span class="kw">false</span></div>
<div class="t ln" style="left:23.5px;top:984.54px;font-size:27.6px;width:64.5px;text-align:right;color:#a6a6a6;transform:scaleX(.925);transform-origin:100% 50%">97</div>
<div class="t ln" style="left:23.5px;top:1024.54px;font-size:27.6px;width:64.5px;text-align:right;color:#a6a6a6;transform:scaleX(.925);transform-origin:100% 50%">98</div>
<div class="t code" style="left:432.64px;top:1022.83px;font-size:30.9px;">} <span class="sf">label</span>: {</div>
<div class="t ln" style="left:23.5px;top:1064.54px;font-size:27.6px;width:64.5px;text-align:right;color:#a6a6a6;transform:scaleX(.925);transform-origin:100% 50%">99</div>
<div class="t ln" style="left:23.5px;top:1104.54px;font-size:27.6px;width:64.5px;text-align:right;color:#a6a6a6;transform:scaleX(.925);transform-origin:100% 50%">100</div>
<div class="t code" style="left:506.79999999999995px;top:1102.83px;font-size:30.9px;"><span class="st">Text</span>(<span class="sr">&quot;New Joke&quot;</span>)</div>
<div class="t ln" style="left:23.5px;top:1144.54px;font-size:27.6px;width:64.5px;text-align:right;color:#a6a6a6;transform:scaleX(.925);transform-origin:100% 50%">101</div>
<div class="t ln" style="left:23.5px;top:1184.54px;font-size:27.6px;width:64.5px;text-align:right;color:#a6a6a6;transform:scaleX(.925);transform-origin:100% 50%">102</div>
<div class="t code" style="left:432.64px;top:1182.83px;font-size:30.9px;">}</div>
<div class="t ln" style="left:23.5px;top:1224.54px;font-size:27.6px;width:64.5px;text-align:right;color:#a6a6a6;transform:scaleX(.925);transform-origin:100% 50%">103</div>
<div class="t code" style="left:432.64px;top:1222.83px;font-size:30.9px;">.<span class="sf">buttonStyle</span>(.<span class="sf">borderedProminent</span>)</div>
<div class="t ln" style="left:23.5px;top:1264.54px;font-size:27.6px;width:64.5px;text-align:right;color:#a6a6a6;transform:scaleX(.925);transform-origin:100% 50%">104</div>
<div class="t code" style="left:432.64px;top:1262.83px;font-size:30.9px;">.<span class="sf">opacity</span>(<span class="pj">buttonOpacity</span>)</div>
<div class="t ln" style="left:23.5px;top:1304.54px;font-size:27.6px;width:64.5px;text-align:right;color:#a6a6a6;transform:scaleX(.925);transform-origin:100% 50%">105</div>
<div class="t code" style="left:432.64px;top:1302.83px;font-size:30.9px;">.<span class="sf">onReceive</span>(<span class="pj">buttonTimer</span>) { _ <span class="kw">in</span></div>
<div class="t ln" style="left:23.5px;top:1344.54px;font-size:27.6px;width:64.5px;text-align:right;color:#a6a6a6;transform:scaleX(.925);transform-origin:100% 50%">106</div>
<div class="t ln" style="left:23.5px;top:1384.54px;font-size:27.6px;width:64.5px;text-align:right;color:#a6a6a6;transform:scaleX(.925);transform-origin:100% 50%">107</div>
<div class="t code" style="left:506.79999999999995px;top:1382.83px;font-size:30.9px;"><span class="sf">withAnimation</span> {</div>
<div class="t ln" style="left:23.5px;top:1424.54px;font-size:27.6px;width:64.5px;text-align:right;color:#a6a6a6;transform:scaleX(.925);transform-origin:100% 50%">108</div>
<div class="t code" style="left:580.96px;top:1422.83px;font-size:30.9px;"><span class="pj">buttonOpacity</span> = <span class="nu">1.0</span></div>
<div class="t ln" style="left:23.5px;top:1464.54px;font-size:27.6px;width:64.5px;text-align:right;color:#a6a6a6;transform:scaleX(.925);transform-origin:100% 50%">109</div>
<div class="t code" style="left:506.79999999999995px;top:1462.83px;font-size:30.9px;">}</div>
<div class="t ln" style="left:23.5px;top:1504.54px;font-size:27.6px;width:64.5px;text-align:right;color:#a6a6a6;transform:scaleX(.925);transform-origin:100% 50%">110</div>
<div class="t ln" style="left:23.5px;top:1544.54px;font-size:27.6px;width:64.5px;text-align:right;color:#a6a6a6;transform:scaleX(.925);transform-origin:100% 50%">111</div>
<div class="t code" style="left:506.79999999999995px;top:1542.83px;font-size:30.9px;"><span class="cm">// Stop the timer</span></div>
<div class="t ln" style="left:23.5px;top:1584.54px;font-size:27.6px;width:64.5px;text-align:right;color:#a6a6a6;transform:scaleX(.925);transform-origin:100% 50%">112</div>
<div class="t code" style="left:506.79999999999995px;top:1582.83px;font-size:30.9px;"><span class="pj">buttonTimer</span>.<span class="sf">upstream</span>.<span class="sf">connect</span>().<span class="sf">cancel</span>()</div>
<div class="t ln" style="left:23.5px;top:1624.54px;font-size:27.6px;width:64.5px;text-align:right;color:#a6a6a6;transform:scaleX(.925);transform-origin:100% 50%">113</div>
<div class="t code" style="left:432.64px;top:1622.83px;font-size:30.9px;">}</div>
<div class="r" style="left:10px;top:40px;width:10px;height:96.69999999999999px;background:#adc8fb;border:2px solid #2f6ff6;border-radius:5px"></div>
<div class="r" style="left:10px;top:897px;width:10px;height:120px;background:#adc8fb;border:2px solid #2f6ff6;border-radius:5px"></div>
<div class="r" style="left:98px;top:0px;width:14px;height:1643px;background:#ababab;"></div>
<div class="r" style="left:98px;top:97.5px;width:14px;height:1118.0px;background:#d8d8d8;border-radius:7px 7px 7px 7px"></div>
<div class="r" style="left:98px;top:99px;width:14px;height:1115px;background:#a0a0a0;border-radius:7px 7px 7px 7px"></div>
<div class="r" style="left:98px;top:1037px;width:14px;height:2px;background:#e8e8e8;"></div>
<div class="r" style="left:98px;top:218.0px;width:14px;height:198.5px;background:#d8d8d8;border-radius:7px 7px 7px 7px"></div>
<div class="r" style="left:98px;top:219.5px;width:14px;height:195.5px;background:#929292;border-radius:7px 7px 7px 7px"></div>
<div class="r" style="left:98px;top:497.5px;width:14px;height:119.0px;background:#d8d8d8;border-radius:7px 7px 7px 7px"></div>
<div class="r" style="left:98px;top:499px;width:14px;height:116px;background:#929292;border-radius:7px 7px 7px 7px"></div>
<div class="r" style="left:98px;top:1297.5px;width:14px;height:412.5px;background:#d8d8d8;border-radius:7px 7px 0px 0px"></div>
<div class="r" style="left:98px;top:1299px;width:14px;height:411px;background:#a0a0a0;border-radius:7px 7px 0px 0px"></div>
<div class="r" style="left:98px;top:1377.5px;width:14px;height:118.5px;background:#d8d8d8;border-radius:7px 7px 7px 7px"></div>
<div class="r" style="left:98px;top:1379px;width:14px;height:115.5px;background:#929292;border-radius:7px 7px 7px 7px"></div>
<div class="r" style="left:98px;top:897px;width:14px;height:40px;background:#929aa2;"></div>
</div>
<div class="r" style="left:546px;top:190px;width:1698px;height:38px;background:#f3f3f3;"></div>
<div class="r" style="left:546px;top:228px;width:1698px;height:2px;background:#d9d9d9;"></div>
<div class="r" style="left:546px;top:230px;width:1698px;height:38px;background:#f3f3f3;"></div>
<div class="r" style="left:546px;top:268px;width:1698px;height:2px;background:#d4d4d4;box-shadow:0 4px 12px rgba(0,0,0,.17)"></div>
<div class="t ln" style="left:569.5px;top:198.34px;font-size:27.6px;width:64.5px;text-align:right;color:#9b9b9b;transform:scaleX(.925);transform-origin:100% 50%">10</div>
<div class="t ln" style="left:569.5px;top:238.04px;font-size:27.6px;width:64.5px;text-align:right;color:#9b9b9b;transform:scaleX(.925);transform-origin:100% 50%">33</div>
<div class="t code" style="left:682px;top:197.13px;font-size:30.9px;"><span class="kw">struct</span> <span class="td">JokeView</span>: <span class="st">View</span> {</div>
<div class="t code" style="left:756.16px;top:236.93px;font-size:30.9px;"><span class="kw">var</span> <span class="od">body</span>: <span class="kw">some</span> <span class="st">View</span> {</div>
<div class="r" style="left:2244px;top:190px;width:29px;height:1643px;background:#fafafa;border-left:1.500px solid #e7e7e7"></div>
<div class="r" style="left:2252px;top:828.5px;width:16px;height:337.5px;background:#7f7f7f;border-radius:8px"></div>
<div class="r" style="left:2272.5px;top:190px;width:3px;height:1643px;background:#e4e4e4;"></div>
<div class="r" style="left:546px;top:1832px;width:2478px;height:2px;background:#dedede;"></div>
<svg class="ic" style="left:569px;top:1851.5px" width="30" height="19" viewBox="0 0 30 19" ><path d="M0 3.200C0 1.200 1.200 0 3.200 0h19c1.300 0 2.200.5 2.900 1.600l4.300 6.300c.7 1 .7 2.200 0 3.200l-4.300 6.300c-.7 1.100-1.600 1.600-2.900 1.600h-19C1.200 19 0 17.800 0 15.800z" fill="#3478f6"/></svg>
<div class="t " style="left:2760.5px;top:1849.45px;font-size:23.8px;color:#7b7b7b;-webkit-text-stroke:.6px #7b7b7b">Line: 95  Col: 37</div>
<div class="r" style="left:2954px;top:1849.5px;width:2px;height:23px;background:#e0e0e0;"></div>
<svg class="ic" style="left:2973px;top:1848px" width="26" height="26" viewBox="0 0 26 26" ><rect x="1.200" y="1.200" width="23.600" height="23.600" rx="4.500" fill="none" stroke="#7b7b7b" stroke-width="2.200"/><rect x="4.500" y="16" width="17" height="5.500" rx="1.600" fill="#7b7b7b"/></svg>
<div class="r" style="left:2275.5px;top:190px;width:748.5px;height:1642px;background:#f2f2f2;"></div>
<div class="r" style="left:2300px;top:214px;width:63px;height:52px;background:#fff;border-radius:13px;box-shadow:0 1px 5px rgba(0,0,0,.16),0 0 1px rgba(0,0,0,.18)"></div>
<svg class="ic" style="left:2321px;top:225px" width="22" height="31" viewBox="0 0 22 31" ><g fill="none" stroke="#4d4d4d" stroke-width="2.300" stroke-linecap="round" stroke-linejoin="round"><path d="M4 1.500h14M6.500 1.500c0 5 .5 7-.5 9.500C4.500 12.800 1.500 14.500 1.500 19h19c0-4.500-3-6.200-4.500-8-1-2.500-.5-4.500-.5-9.500"/><path d="M11 19v10.500"/></g></svg>
<div class="r" style="left:2383px;top:214px;width:167px;height:52px;background:#cddcfb;border-radius:13px;box-shadow:0 1px 5px rgba(0,0,0,.16),0 0 1px rgba(0,0,0,.18)"></div>
<svg class="ic" style="left:2400.5px;top:227px" width="23" height="24" viewBox="0 0 23 24" ><g fill="none" stroke="#2f76f5" stroke-width="2" stroke-linecap="round"><rect x="1" y="7.500" width="21" height="15.500" rx="3"/><path d="M4 4.200h15M6.500 1h10"/></g></svg>
<div class="t " style="left:2436px;top:229.00px;font-size:22.8px;color:#2f76f5">JokeView</div>
<div class="r" style="left:2323px;top:578px;width:9px;height:47px;background:#303030;border-radius:1.500px"></div>
<div class="r" style="left:2323px;top:668.5px;width:9px;height:90.5px;background:#303030;border-radius:1.500px"></div>
<div class="r" style="left:2323px;top:785px;width:9px;height:91px;background:#303030;border-radius:1.500px"></div>
<div class="r" style="left:2968px;top:729.5px;width:9px;height:145.0px;background:#303030;border-radius:1.500px"></div>
<svg class="ic" style="left:2332px;top:345px" width="636.5" height="1332.5" viewBox="0 0 636.5 1332.5" ><path d="M182.72 4.25L453.78 4.25C505.17 4.25 530.86 4.25 558.52 13.00C588.72 23.99 612.51 47.78 623.50 77.98C632.25 105.64 632.25 131.33 632.25 182.72L632.25 1149.78C632.25 1201.17 632.25 1226.86 623.50 1254.52C612.51 1284.72 588.72 1308.51 558.52 1319.50C530.86 1328.25 505.17 1328.25 453.78 1328.25L182.72 1328.25C131.33 1328.25 105.64 1328.25 77.98 1319.50C47.78 1308.51 23.99 1284.72 13.00 1254.52C4.25 1226.86 4.25 1201.17 4.25 1149.78L4.25 182.72C4.25 131.33 4.25 105.64 13.00 77.98C23.99 47.78 47.78 23.99 77.98 13.00C105.64 4.25 131.33 4.25 182.72 4.25Z" fill="#000" stroke="#2d2d2d" stroke-width="8.5"/><path d="M173.34 22.00L462.66 22.00C506.24 22.00 528.03 22.00 551.48 29.42C577.09 38.74 597.26 58.91 606.58 84.52C614.00 107.97 614.00 129.76 614.00 173.34L614.00 1158.66C614.00 1202.24 614.00 1224.03 606.58 1247.48C597.26 1273.09 577.09 1293.26 551.48 1302.58C528.03 1310.00 506.24 1310.00 462.66 1310.00L173.34 1310.00C129.76 1310.00 107.97 1310.00 84.52 1302.58C58.91 1293.26 38.74 1273.09 29.42 1247.48C22.00 1224.03 22.00 1202.24 22.00 1158.66L22.00 173.34C22.00 129.76 22.00 107.97 29.42 84.52C38.74 58.91 58.91 38.74 84.52 29.42C107.97 22.00 129.76 22.00 173.34 22.00Z" fill="#fff"/></svg>
<div class="r" style="left:2558px;top:387.5px;width:184px;height:54px;background:#000;border-radius:27px"></div>
<div class="t " style="left:2354px;top:796.27px;font-size:41.5px;width:592px;text-align:center;color:#000;transform:scaleX(.9415)">How can you tell a vampire has</div>
<div class="t " style="left:2354px;top:846.07px;font-size:41.5px;width:592px;text-align:center;color:#000;transform:scaleX(.9415)">a cold?</div>
<div class="t " style="left:2354px;top:1058.67px;font-size:41.5px;width:592px;text-align:center;color:#000;transform:scaleX(.974)">They start coffin.</div>
<div class="r" style="left:2300px;top:1756px;width:163.5px;height:52px;background:#fff;border-radius:14px;box-shadow:0 1px 5px rgba(0,0,0,.16),0 0 1px rgba(0,0,0,.18)"></div>
<div class="r" style="left:2318px;top:1769px;width:26px;height:26px;background:#0a7aff;border-radius:50%"></div>
<svg class="ic" style="left:2326.5px;top:1775.5px" width="11" height="13" viewBox="0 0 11 13" ><path d="M.8 1.400C.8.600 1.600.200 2.300.600l8 4.900c.700.400.700 1.400 0 1.800l-8 4.900c-.700.400-1.500 0-1.500-.800z" fill="#fff"/></svg>
<svg class="ic" style="left:2366px;top:1770px" width="24" height="24" viewBox="0 0 24 24" ><rect x="1.300" y="1.300" width="21.400" height="21.400" rx="3" fill="none" stroke="#4d4d4d" stroke-width="2.600"/><path d="M8.300 5.200v12.300l3-2.600 2.100 4.700 2.100-.900-2.100-4.600h4z" fill="#4d4d4d"/></svg>
<svg class="ic" style="left:2420px;top:1772.5px" width="23" height="20" viewBox="0 0 23 20" ><g fill="none" stroke="#4d4d4d" stroke-width="1.700"><rect x=".85" y=".85" width="4.300" height="7" rx="1"/><rect x="9.350" y=".85" width="4.300" height="7" rx="1"/><rect x="17.850" y=".85" width="4.300" height="7" rx="1"/><rect x=".85" y="12.150" width="4.300" height="7" rx="1"/><rect x="9.350" y="12.150" width="4.300" height="7" rx="1"/><rect x="17.850" y="12.150" width="4.300" height="7" rx="1"/></g></svg>
<div class="r" style="left:2483px;top:1756px;width:63.5px;height:52px;background:#fff;border-radius:14px;box-shadow:0 1px 5px rgba(0,0,0,.16),0 0 1px rgba(0,0,0,.18)"></div>
<svg class="ic" style="left:2502px;top:1770px" width="25" height="25" viewBox="0 0 25 25" ><rect x="1.100" y="1.100" width="22.800" height="9.300" rx="4.650" fill="none" stroke="#4d4d4d" stroke-width="2.200"/><circle cx="6" cy="5.750" r="2.300" fill="#4d4d4d"/><rect x="0" y="13.700" width="25" height="11.300" rx="5.650" fill="#4d4d4d"/><circle cx="19" cy="19.350" r="3" fill="#fff"/></svg>
<div class="r" style="left:2566px;top:1756px;width:54.5px;height:52px;background:#fff;border-radius:14px;box-shadow:0 1px 5px rgba(0,0,0,.16),0 0 1px rgba(0,0,0,.18)"></div>
<svg class="ic" style="left:2586px;top:1771px" width="14.5" height="23" viewBox="0 0 14.5 23" ><rect x="1" y="1" width="12.500" height="21" rx="2.400" fill="#d9d9d9" stroke="#4d4d4d" stroke-width="2"/><path d="M5.500 3.400h3.500M5 19.700h4.500" stroke="#4d4d4d" stroke-width="1.100"/></svg>
<div class="r" style="left:2792px;top:1756px;width:208.5px;height:52px;background:#fff;border-radius:14px;box-shadow:0 1px 5px rgba(0,0,0,.16),0 0 1px rgba(0,0,0,.18)"></div>
<svg class="ic" style="left:2811px;top:1769px" width="26" height="26" viewBox="0 0 26 26" ><circle cx="10.300" cy="10.300" r="8.800" fill="none" stroke="#4d4d4d" stroke-width="2.700"/><path d="M17 17l7 7" stroke="#4d4d4d" stroke-width="3.200" stroke-linecap="round"/><path d="M6.500 10.300h7.600" stroke="#4d4d4d" stroke-width="1.800" stroke-linecap="round"/></svg>
<svg class="ic" style="left:2859px;top:1769px" width="26" height="26" viewBox="0 0 26 26" ><circle cx="10.300" cy="10.300" r="8.800" fill="none" stroke="#4d4d4d" stroke-width="2.700"/><path d="M17 17l7 7" stroke="#4d4d4d" stroke-width="3.200" stroke-linecap="round"/><text x="10.300" y="14.600" text-anchor="middle" font-family="Liberation Sans, sans-serif" font-size="12.500" font-weight="400" stroke="#4d4d4d" stroke-width=".4" fill="#4d4d4d">1</text></svg>
<svg class="ic" style="left:2907px;top:1769px" width="26" height="26" viewBox="0 0 26 26" ><circle cx="10.300" cy="10.300" r="8.800" fill="none" stroke="#8a8a8a" stroke-width="2.700"/><path d="M17 17l7 7" stroke="#8a8a8a" stroke-width="3.200" stroke-linecap="round"/><rect x="6.800" y="6.800" width="7" height="7" rx="1.300" fill="none" stroke="#8a8a8a" stroke-width="1.800"/></svg>
<svg class="ic" style="left:2955px;top:1769px" width="26" height="26" viewBox="0 0 26 26" ><circle cx="10.300" cy="10.300" r="8.800" fill="none" stroke="#4d4d4d" stroke-width="2.700"/><path d="M17 17l7 7" stroke="#4d4d4d" stroke-width="3.200" stroke-linecap="round"/><path d="M6.500 10.300h7.600M10.300 6.500v7.600" stroke="#4d4d4d" stroke-width="1.800" stroke-linecap="round"/></svg>
</div>
</body></html>
